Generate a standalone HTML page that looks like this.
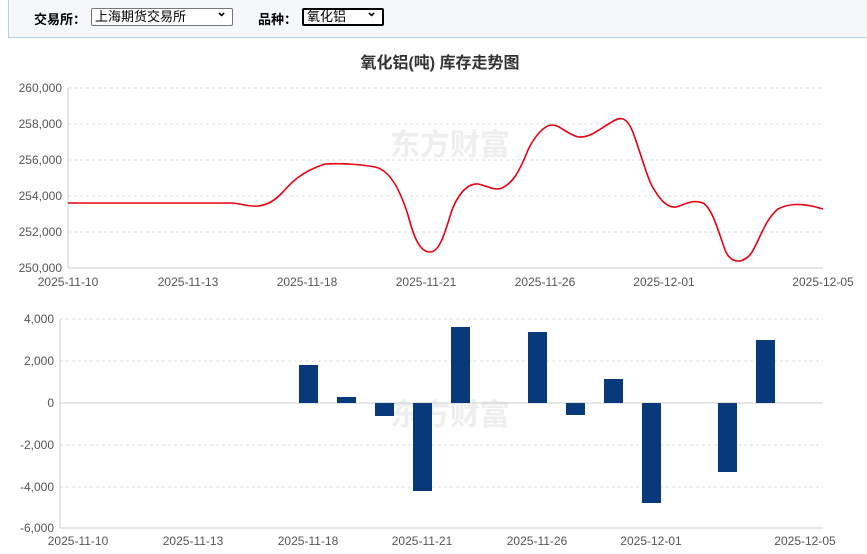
<!DOCTYPE html><html><head><meta charset="utf-8"><style>
body{margin:0;width:867px;height:554px;background:#fff;font-family:"Liberation Sans","Noto Sans CJK SC",sans-serif;overflow:hidden}
.top{position:absolute;left:8px;top:0;width:859px;height:38px;background:#f5f7fa;border:1px solid #b9d2e8;border-top:0;border-right:0;box-sizing:border-box}
.lab{position:absolute;top:9px;font-size:13px;font-weight:bold;color:#000}
.sel{position:absolute;top:8px;height:18px;border:1px solid #767676;background:#fff;font-size:13px;box-sizing:border-box;padding-left:3px;line-height:16px;border-radius:2px}
.sel:after{content:"⌄";position:absolute;right:5px;top:-5px;font-weight:bold}
svg text{font-family:"Liberation Sans","Noto Sans CJK SC",sans-serif}
</style></head><body>
<div class="top"></div>
<div class="lab" style="left:34px">交易所：</div>
<div class="sel" style="left:91px;width:142px">上海期货交易所</div>
<div class="lab" style="left:258px">品种：</div>
<div class="sel" style="left:302px;width:82px;border:2px solid #000;line-height:14px">氧化铝</div>
<svg width="867" height="554" style="position:absolute;left:0;top:0">
<text x="440" y="68" text-anchor="middle" font-size="16" font-weight="bold" fill="#333">氧化铝(吨) 库存走势图</text>
<text x="450" y="155" text-anchor="middle" font-size="30" font-weight="bold" fill="#eee">东方财富</text>
<text x="450" y="425" text-anchor="middle" font-size="30" font-weight="bold" fill="#eee">东方财富</text>
<g stroke="#ddd" stroke-dasharray="3,3">
<line x1="68" x2="823" y1="88" y2="88"/><line x1="68" x2="823" y1="124" y2="124"/><line x1="68" x2="823" y1="160" y2="160"/><line x1="68" x2="823" y1="196" y2="196"/><line x1="68" x2="823" y1="232" y2="232"/>
<line x1="60" x2="823" y1="319" y2="319"/><line x1="60" x2="823" y1="361" y2="361"/><line x1="60" x2="823" y1="445" y2="445"/><line x1="60" x2="823" y1="487" y2="487"/>
</g>
<line x1="68" x2="68" y1="88" y2="268" stroke="#ccc"/>
<line x1="68" x2="823" y1="268" y2="268" stroke="#ccc"/>
<line x1="60" x2="60" y1="319" y2="528" stroke="#ccc"/>
<line x1="60" x2="823" y1="528" y2="528" stroke="#ccc"/>
<line x1="60" x2="823" y1="403" y2="403" stroke="#ccc"/>
<g font-size="12" fill="#555" text-anchor="end">
<text x="62" y="92">260,000</text><text x="62" y="128">258,000</text><text x="62" y="164">256,000</text><text x="62" y="200">254,000</text><text x="62" y="236">252,000</text><text x="62" y="272">250,000</text>
<text x="54" y="323">4,000</text><text x="54" y="365">2,000</text><text x="54" y="407">0</text><text x="54" y="449">-2,000</text><text x="54" y="491">-4,000</text><text x="54" y="532">-6,000</text>
</g>
<g font-size="12" fill="#555" text-anchor="middle">
<text x="68" y="286">2025-11-10</text><text x="188" y="286">2025-11-13</text><text x="307" y="286">2025-11-18</text><text x="426" y="286">2025-11-21</text><text x="545" y="286">2025-11-26</text><text x="664" y="286">2025-12-01</text><text x="823" y="286">2025-12-05</text>
<text x="78" y="545">2025-11-10</text><text x="193" y="545">2025-11-13</text><text x="308" y="545">2025-11-18</text><text x="422" y="545">2025-11-21</text><text x="537" y="545">2025-11-26</text><text x="651" y="545">2025-12-01</text><text x="805" y="545">2025-12-05</text>
</g>
<path fill="none" stroke="#e60012" stroke-width="1.6" d="M68,203 L230,203 C240,203 248,207 258,206 C268,205 275,200 282,193 C290,184 300,172 325,164 C345,163 365,165 375,167 C390,170 400,190 408,215 C414,238 420,252 430,252 C440,252 445,232 452,210 C460,190 470,183 478,184 C488,186 494,191 502,188 C512,183 518,175 528,150 C535,135 545,125 552,125 C560,125 565,133 578,137 C590,138 598,130 610,123 C618,118 625,114 632,130 C640,150 646,175 652,186 C660,200 667,208 676,207 C686,204 693,199 703,203 C712,208 718,230 725,250 C730,262 740,265 750,255 C758,245 764,220 778,209 C790,203 800,204 812,206 L823,209"/>
<g fill="#083a7b">
<rect x="299" y="365" width="19" height="38"/><rect x="337" y="397" width="19" height="6"/><rect x="375" y="403" width="19" height="13"/><rect x="413" y="403" width="19" height="88"/><rect x="451" y="327" width="19" height="76"/><rect x="528" y="332" width="19" height="71"/><rect x="566" y="403" width="19" height="12"/><rect x="604" y="379" width="19" height="24"/><rect x="642" y="403" width="19" height="100"/><rect x="718" y="403" width="19" height="69"/><rect x="756" y="340" width="19" height="63"/>
</g>
</svg>
</body></html>
